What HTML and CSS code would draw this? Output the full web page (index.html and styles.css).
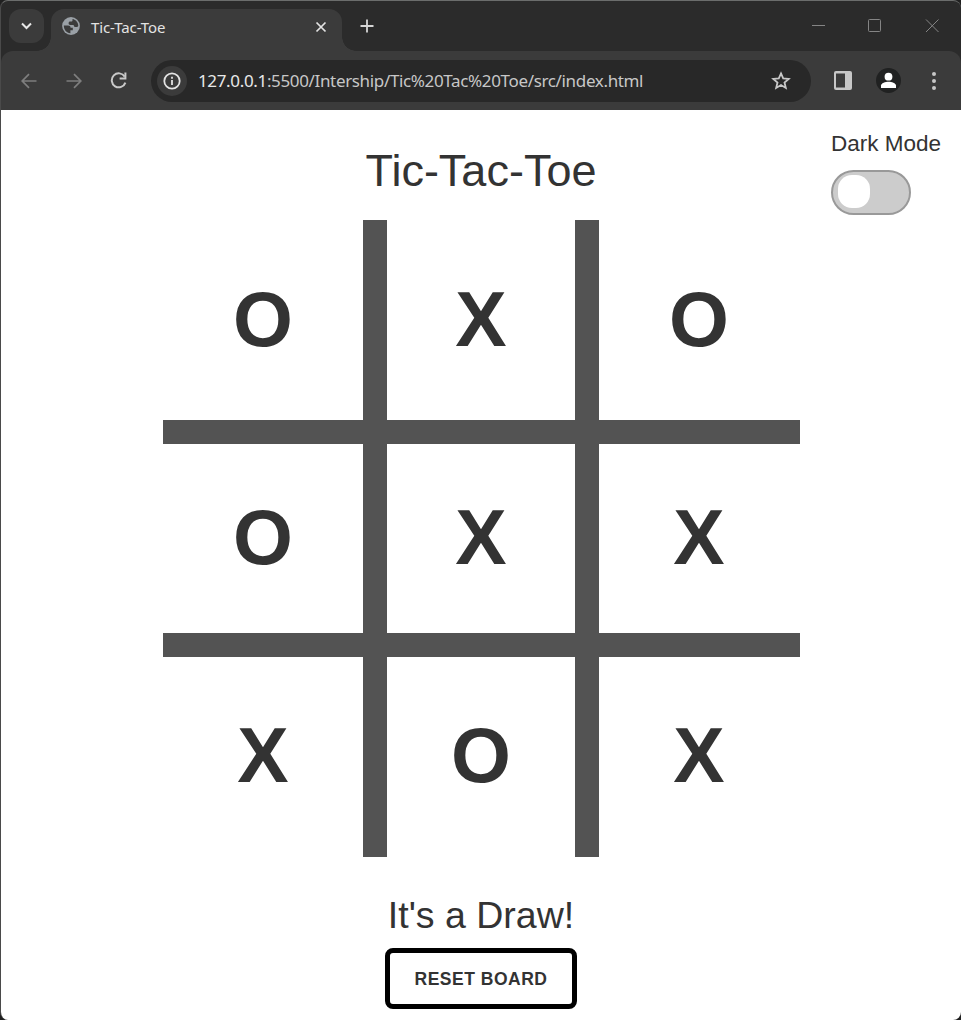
FILE: index.html
```html
<!DOCTYPE html>
<html lang="en">
<head>
<meta charset="utf-8">
<title>Tic-Tac-Toe</title>
<link rel="stylesheet" href="styles.css">
</head>
<body>
<div class="window">
  <header class="tabstrip">
    <div class="tab-search"><svg width="35" height="34" viewBox="0 0 35 34"><path d="M13 14.5l4.5 4.5 4.5-4.5" fill="none" stroke="#e8e8e8" stroke-width="2"/></svg></div>
    <div class="tab">
      <svg class="globe" width="18" height="18" viewBox="0 0 18 18"><circle cx="9" cy="9" r="8.9" fill="#9aa0a6"/><path d="M1.8 8.6H6c1.6 0 2.6.8 2.6 2.2h2.2v2.4H8.4v3c-3.8-.1-6.6-3.2-6.6-7.6zM10.5 1.900c3.500.7 5.800 3.500 5.800 7-.6.800-1.400 1.200-2.400 1.200-1.600 0-2.200-.9-2.200-2.200H8.200c-1 0-1.600-.7-1.600-1.600 0-1.100.6-1.700 1.600-1.700h.9c.9 0 1.400-.6 1.400-1.400z" fill="#3b3b3b"/></svg>
      <span class="tab-title">Tic-Tac-Toe</span>
      <svg class="tab-close" width="12" height="12" viewBox="0 0 12 12"><path d="M1.5 1.5l9 9M10.5 1.5l-9 9" stroke="#e3e3e3" stroke-width="1.7"/></svg>
    </div>
    <svg class="new-tab" width="14" height="14" viewBox="0 0 14 14"><path d="M7 .5v13M.5 7h13" stroke="#d6d6d6" stroke-width="1.8"/></svg>
    <div class="controls">
      <svg width="14" height="14" viewBox="0 0 14 14"><path d="M1 6.500h13" stroke="#858585"/></svg>
      <svg width="14" height="14" viewBox="0 0 14 14"><rect x=".5" y=".5" width="12" height="12" rx="1" fill="none" stroke="#858585"/></svg>
      <svg width="14" height="14" viewBox="0 0 14 14"><path d="M1 .5l12.500 12.500M13.500 .5L1 13" stroke="#858585"/></svg>
    </div>
  </header>
  <nav class="toolbar">
    <svg class="back" width="16" height="16" viewBox="0 0 16 16"><path d="M15.500 8H1.500M8 1.200L1.200 8 8 14.800" fill="none" stroke="#7e7e7e" stroke-width="1.7"/></svg>
    <svg class="forward" width="16" height="16" viewBox="0 0 16 16"><path d="M.5 8h14M8 1.200L14.800 8 8 14.800" fill="none" stroke="#7e7e7e" stroke-width="1.7"/></svg>
    <svg class="reload" width="17" height="17" viewBox="0 0 17 17"><path d="M14.700 4.600A7 7 0 1 0 15.400 10.600" fill="none" stroke="#c9c9c9" stroke-width="2"/><path d="M15.400.6V6.500H9.600" fill="none" stroke="#c9c9c9" stroke-width="2"/></svg>
    <div class="address">
      <div class="info"><svg width="18" height="18" viewBox="0 0 18 18"><circle cx="9" cy="9" r="7.700" fill="none" stroke="#e3e3e3" stroke-width="1.8"/><path d="M9 8v5M9 4.700v2" stroke="#e3e3e3" stroke-width="1.8"/></svg></div>
      <span class="url"><b>127.0.0.1</b>:5500/Intership/Tic%20Tac%20Toe/src/index.html</span>
      <svg class="star" width="20" height="20" viewBox="0 0 20 20"><path d="M10 2.400l2.200 5 5.500.5-4.200 3.600 1.300 5.400-4.800-2.900-4.800 2.900 1.300-5.400-4.200-3.600 5.500-.5z" fill="none" stroke="#c7c7c7" stroke-width="1.8"/></svg>
    </div>
    <svg class="panel" width="18" height="19" viewBox="0 0 18 19"><rect width="18" height="19" rx="2" fill="#c7c7c7"/><rect x="2" y="2.500" width="9" height="14" fill="#3b3b3b"/></svg>
    <svg class="profile" width="25" height="25" viewBox="0 0 25 25"><circle cx="12.500" cy="12.500" r="12.500" fill="#202121"/><circle cx="12.500" cy="8.700" r="3.900" fill="#fff"/><path d="M5 20v-2.500c0-2.500 4.500-3.800 7.500-3.800s7.500 1.300 7.500 3.800V20z" fill="#fff"/></svg>
    <svg class="more" width="4" height="18" viewBox="0 0 4 18"><circle cx="2" cy="2" r="2" fill="#c7c7c7"/><circle cx="2" cy="9" r="2" fill="#c7c7c7"/><circle cx="2" cy="16" r="2" fill="#c7c7c7"/></svg>
  </nav>
  <main class="page">
    <label class="dark-mode"><span class="dark-label">Dark Mode</span><span class="switch"><span class="knob"></span></span></label>
    <h1 class="title">Tic-Tac-Toe</h1>
    <div class="board">
      <div class="cell">O</div><div class="cell">X</div><div class="cell">O</div>
      <div class="cell">O</div><div class="cell">X</div><div class="cell">X</div>
      <div class="cell">X</div><div class="cell">O</div><div class="cell">X</div>
    </div>
    <h2 class="result">It's a Draw!</h2>
    <button class="reset">RESET BOARD</button>
  </main>
</div>
</body>
</html>
```
FILE: styles.css
```css
* { box-sizing: border-box; }
body { margin: 0; background: #202020; font-family: "Liberation Sans", Arial, sans-serif; color: #333; }
svg { display: block; flex: none; }
.window { height: 1020px; display: flex; flex-direction: column; border-top: 1px solid #6b6d6c; border-left: 1px solid #4a4a4a; border-radius: 8px; overflow: hidden; background: #2b2b2b; }
.tabstrip { height: 50px; flex: none; display: flex; align-items: flex-start; padding: 8px 0 0 8px; }
.tab-search { width: 35px; height: 34px; border-radius: 12px; background: #3b3b3b; }
.tab { position: relative; width: 291px; height: 42px; margin-left: 7px; padding: 0 15px 6px 11px; display: flex; align-items: center; border-radius: 13px 13px 0 0; background: #3b3b3b; }
.tab::before, .tab::after { content: ""; position: absolute; bottom: 0; width: 14px; height: 14px; }
.tab::before { left: -14px; background: radial-gradient(circle at 0 0, transparent 13.5px, #3b3b3b 14px); }
.tab::after { right: -14px; background: radial-gradient(circle at 100% 0, transparent 13.5px, #3b3b3b 14px); }
.globe { margin-top: -2px; }
.tab-title { margin: 0 0 0 11px; flex: 1; font: 15px/20px "Noto Sans", sans-serif; letter-spacing: -.1px; color: #e3e3e3; }
.new-tab { margin: 10px 0 0 18px; }
.controls { margin: 10px 22px 0 auto; display: flex; gap: 43px; }
.toolbar { height: 59px; flex: none; display: flex; align-items: center; padding: 0 25px 0 20px; background: #3b3b3b; border-radius: 12px 12px 0 0; }
.forward { margin-left: 29px; }
.reload { margin-left: 28px; }
.address { width: 660px; height: 42px; margin: 0 0 0 24px; padding: 0 20px 0 6px; display: flex; align-items: center; border-radius: 21px; background: #282828; }
.info { width: 30px; height: 30px; border-radius: 50%; display: grid; place-items: center; background: #3b3b3b; }
.url { margin-left: 11px; flex: 1; white-space: nowrap; font: 17px/24px "Noto Sans", sans-serif; letter-spacing: -.35px; color: #c7c7c7; }
.url b { font-weight: 400; color: #e8e8e8; }
.panel { margin-left: 23px; }
.profile { margin-left: 24px; }
.more { margin-left: 31px; }
.page { position: relative; flex: 1; display: flex; flex-direction: column; align-items: center; background: #fff; }
.dark-mode { position: absolute; top: 20px; right: 20px; width: 110px; }
.dark-label { display: block; height: 40px; font-size: 22.5px; line-height: 27px; white-space: nowrap; }
.switch { display: block; width: 80px; height: 45px; padding: 3px 5px; border: 2px solid #999; border-radius: 22.5px; background: #ccc; }
.knob { display: block; width: 32px; height: 33px; border-radius: 14px; background: #fff; }
.title { margin: 35px 0 0; height: 75px; font-size: 45px; font-weight: 400; line-height: 52px; }
.board { width: 637px; height: 637px; display: grid; grid-template: repeat(3, 201px) / repeat(3, 201px); gap: 17px; background: linear-gradient(#535353, #535353) 200px 0 / 24px 100% no-repeat, linear-gradient(#535353, #535353) 412px 0 / 24px 100% no-repeat, linear-gradient(#535353, #535353) 0 200px / 100% 24px no-repeat, linear-gradient(#535353, #535353) 0 413px / 100% 24px no-repeat; }
.cell { display: grid; place-items: center; padding-bottom: 3px; font-size: 77px; font-weight: 700; line-height: 1; }
.result { margin: 37px 0 0; height: 54px; font-size: 37.5px; font-weight: 400; line-height: 43px; }
.reset { width: 192px; height: 61px; padding: 1px 0 0; border: 5px solid #000; border-radius: 8px; background: #fff; color: #333; font: 700 17.5px "Liberation Sans", Arial, sans-serif; letter-spacing: .5px; }
```
